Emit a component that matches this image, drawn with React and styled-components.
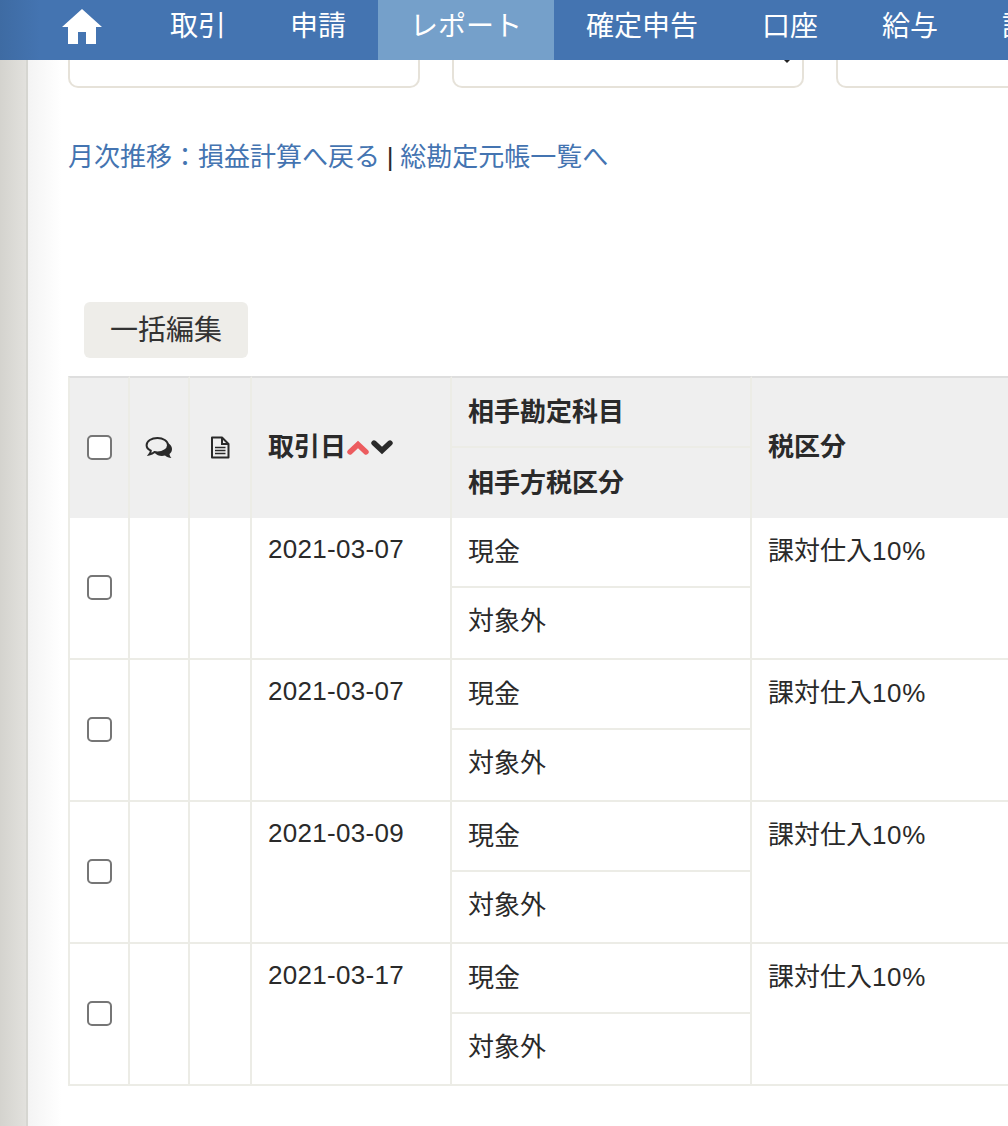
import React from "react";
import styled, { createGlobalStyle } from "styled-components";

const Global = createGlobalStyle`
  html, body { margin: 0; padding: 0; background: #fff; overflow: hidden; height: 1126px; }
  body { font-family: "Liberation Sans", "Noto Sans CJK JP", sans-serif; color: #2a2a2a; font-size: 26px; }
`;
const Page = styled.div`display: flex; flex-direction: column; width: 1008px; height: 1126px; overflow: hidden;`;
const NavBar = styled.nav`
  display: flex; height: 60px; flex: none; padding-left: 44px; color: #fff;
  background: linear-gradient(to right, #3e6ba3 0, #4474b1 40px);
`;
const HomeItem = styled.a`flex: none; width: 94px; display: flex; align-items: flex-start; padding: 9px 0 0 18px; box-sizing: border-box;`;
const NavItem = styled.a`
  flex: none; padding: 9px 32px 0; font-size: 28px; line-height: 36px; white-space: nowrap;
  background: ${p => (p.$active ? "#75a0ca" : "transparent")};
  height: 60px; box-sizing: border-box;
`;
const Body = styled.div`display: flex; flex: 1; min-height: 0;`;
const Gutter = styled.div`
  width: 28px; flex: none; box-sizing: border-box; border-right: 2px solid #d6d6d1;
  background: linear-gradient(to right, #d4d3ce, #e2e1dd);
`;
const Main = styled.main`
  flex: 1; min-width: 0; overflow: hidden; padding-left: 40px;
  background: linear-gradient(to right, #f4f4f4 0, #fff 34px);
`;
const Cards = styled.div`display: flex; gap: 32px; height: 28px; width: 1100px;`;
const Card = styled.div`
  position: relative; flex: none; width: 352px; height: 28px; box-sizing: border-box; background: #fff;
  border: 2px solid #e6e2d9; border-top: none; border-radius: 0 0 10px 10px;
`;
const SelectTip = styled.span`
  position: absolute; right: 12px; top: 0; width: 0; height: 0;
  border-left: 3px solid transparent; border-right: 3px solid transparent; border-top: 3px solid #222;
`;
const LinkRow = styled.p`margin: 51px 0 0; height: 36px; line-height: 36px; font-size: 26px; white-space: nowrap; word-spacing: -0.5px;`;
const Link = styled.a`color: #4474b1;`;
const BulkButton = styled.button`
  display: block; margin: 127px 0 18px 16px; width: 164px; height: 56px; padding: 2px 0 0; box-sizing: border-box;
  border: none; border-radius: 6px;
  background: #eeede9; color: #333; font: 28px/36px "Liberation Sans", "Noto Sans CJK JP", sans-serif;
`;
const Table = styled.table`
  border-collapse: separate; border-spacing: 0; table-layout: fixed; width: 1200px; font-size: 26px; background: #fff;
`;
const Tr = styled.tr`height: ${p => p.$h}px;`;
const Th = styled.th`
  box-sizing: border-box; border-right: 2px solid #ecece6; line-height: 32px; color: #2a2a2a;
  border-left: ${p => (p.$first ? "2px solid #ecece6" : "none")};
  background: #efefef; text-align: left; font-weight: 700; padding: ${p => (p.$tall ? "0 16px 2px" : "0 16px")};
  border-top: ${p => (p.$inner ? "none" : "2px solid #dedede")};
  border-bottom: ${p => (p.$split ? "2px solid #ecece6" : "none")};
`;
const IconTh = styled(Th)`padding: 0 0 2px; text-align: center;`;
const Td = styled.td`
  box-sizing: border-box; border-right: 2px solid #ecece6; line-height: 32px; color: #2a2a2a;
  border-left: ${p => (p.$first ? "2px solid #ecece6" : "none")};
  padding: ${p => (p.$top ? `${p.$top}px 16px 0` : "0 16px")};
  vertical-align: ${p => (p.$top ? "top" : "middle")};
  border-bottom: 2px solid #ecece6;
`;
const LowerTd = styled(Td)`padding-bottom: 4px;`;
const CheckTd = styled(Td)`padding: 0 0 2px;`;
const Check = styled.input.attrs({ type: "checkbox" })`
  appearance: none; display: block; margin: 0 auto; width: 25px; height: 25px; box-sizing: border-box;
  border: 2px solid #767676; border-radius: 5px; background: #fff;
`;
const Wide = styled.span`letter-spacing: ${p => p.$s}px;`;
const SortIcons = styled.span`display: inline-flex; vertical-align: 1px; gap: 2px; margin-left: 1px;`;
const HeadIcon = styled.svg`display: inline-block; vertical-align: middle; margin-bottom: 3px;`;

const HomeIcon = () => (
  <svg width="40" height="36" viewBox="0 0 40 36" fill="#fff">
    <path d="M20 0 L40 18 L34 18 L34 35 L24 35 L24 23 L16 23 L16 35 L6 35 L6 18 L0 18 Z" />
  </svg>
);
const Chevron = ({ up, color }) => (
  <svg width="22" height="15" viewBox="0 0 22 15" fill="none" stroke={color} strokeWidth="5.4" strokeLinejoin="miter" strokeLinecap="round">
    <path d={up ? "M3 12 L11 4.5 L19 12" : "M3 3 L11 10.5 L19 3"} />
  </svg>
);
const CommentsIcon = () => (
  <HeadIcon width="28" height="23" viewBox="0 0 28 23">
    <path fill="#2a2a2a" d="M18 6 C23 6 27 9 27 13 C27 15 26 17 24.5 18 C24.6 19.5 25.5 21 26.5 22 C24 21.8 21.5 20.8 20 19.5 C16 20.5 12 19.5 10 17 Z" />
    <path fill="#efefef" stroke="#2a2a2a" strokeWidth="2" d="M12.5 2 C18 2 23 5 23 9.2 C23 13.4 18 16.4 12.5 16.4 C11.5 16.4 10.5 16.3 9.5 16.1 C8 17.4 6.2 18.2 4.3 18.5 C5.2 17.4 5.8 16 5.8 14.6 C3.2 13.4 1.6 11.4 1.6 9.2 C1.6 5 6.5 2 12.5 2 Z" />
  </HeadIcon>
);
const DocIcon = () => (
  <HeadIcon width="20" height="23" viewBox="0 0 20 23" fill="none" stroke="#2a2a2a">
    <path strokeWidth="2" strokeLinejoin="round" d="M2 1.5 H12 L18.5 8 V21.5 H2 Z" />
    <path strokeWidth="2" d="M12 1.5 V8 H18.5" />
    <path strokeWidth="1.7" d="M5 11.5 H15.5 M5 14.5 H15.5 M5 17.5 H15.5" />
  </HeadIcon>
);

const dates = ["2021-03-07", "2021-03-07", "2021-03-09", "2021-03-17"];
const nav = ["取引", "申請", "レポート", "確定申告", "口座", "給与", "設定"];

export default function App() {
  return (
    <Page>
      <Global />
      <NavBar>
        <HomeItem><HomeIcon /></HomeItem>
        {nav.map(n => <NavItem key={n} $active={n === "レポート"}>{n}</NavItem>)}
      </NavBar>
      <Body>
        <Gutter />
        <Main>
          <Cards>
            <Card />
            <Card><SelectTip /></Card>
            <Card />
          </Cards>
          <LinkRow>
            <Link>月次推移：損益計算へ戻る</Link> | <Link>総勘定元帳一覧へ</Link>
          </LinkRow>
          <BulkButton>一括編集</BulkButton>
          <Table>
            <colgroup>
              <col width="62" /><col width="60" /><col width="62" /><col width="200" /><col width="300" /><col width="516" />
            </colgroup>
            <thead>
              <Tr $h={72}>
                <IconTh rowSpan={2} $first><Check /></IconTh>
                <IconTh rowSpan={2}><CommentsIcon /></IconTh>
                <IconTh rowSpan={2}><DocIcon /></IconTh>
                <Th rowSpan={2} $tall>取引日<SortIcons><Chevron up color="#ec5c5f" /><Chevron color="#2a2a2a" /></SortIcons></Th>
                <Th $split>相手勘定科目</Th>
                <Th rowSpan={2} $tall>税区分</Th>
              </Tr>
              <Tr $h={70}><Th $inner>相手方税区分</Th></Tr>
            </thead>
            <tbody>
              {dates.map((d, i) => (
                <React.Fragment key={i}>
                  <Tr $h={70}>
                    <CheckTd rowSpan={2} $first><Check /></CheckTd>
                    <Td rowSpan={2} />
                    <Td rowSpan={2} />
                    <Td rowSpan={2} $top={15}><Wide $s={0.3}>{d}</Wide></Td>
                    <Td>現金</Td>
                    <Td rowSpan={2} $top={17}>課対仕入<Wide $s={0.6}>10%</Wide></Td>
                  </Tr>
                  <Tr $h={72}><LowerTd>対象外</LowerTd></Tr>
                </React.Fragment>
              ))}
            </tbody>
          </Table>
        </Main>
      </Body>
    </Page>
  );
}
